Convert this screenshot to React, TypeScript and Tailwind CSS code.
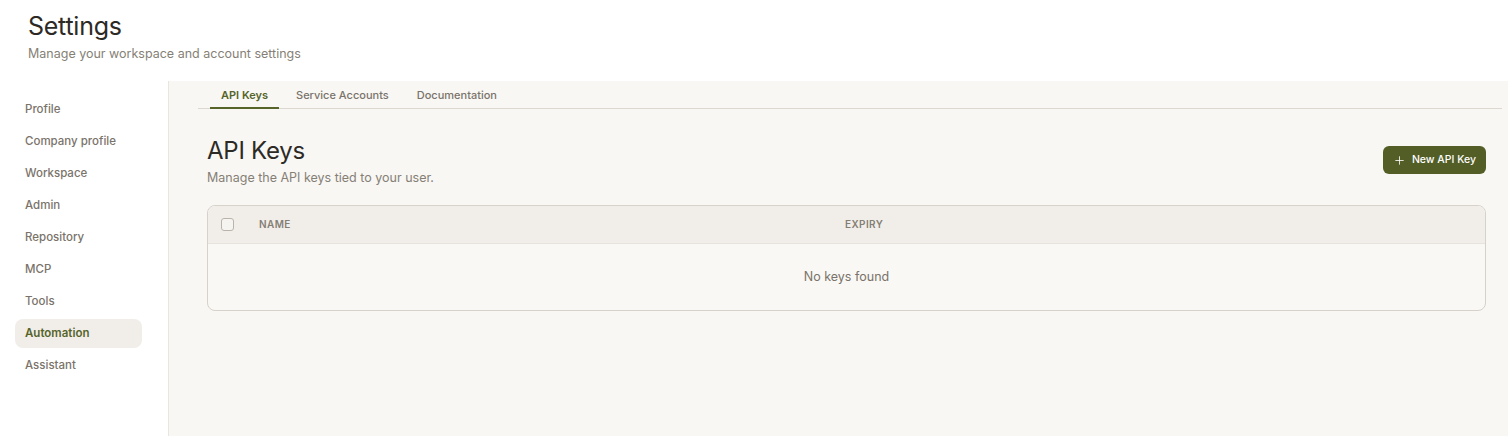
import { Plus } from "lucide-react";

const navItems = [
  "Profile",
  "Company profile",
  "Workspace",
  "Admin",
  "Repository",
  "MCP",
  "Tools",
  "Automation",
  "Assistant",
];

const tabs = ["API Keys", "Service Accounts", "Documentation"];

export default function App() {
  const activeNav = "Automation";
  const activeTab = "API Keys";

  return (
    <div className="flex h-[436px] flex-col bg-white font-['Inter',sans-serif] text-[#2d2a26]">
      <header className="h-[81px] shrink-0 px-[28px] pt-[10px]">
        <h1 className="text-[25px] leading-[32px] tracking-[-0.01em]">Settings</h1>
        <p className="mt-[3px] text-[12.5px] leading-[18px] text-[#867f76]">
          Manage your workspace and account settings
        </p>
      </header>

      <div className="flex min-h-0 flex-1">
        <aside className="w-[169px] shrink-0 border-r border-[#e9e5df] px-[15px] pt-[14px]">
          <nav className="flex w-[127px] flex-col gap-[3px]">
            {navItems.map((item) => (
              <a
                key={item}
                href="#"
                className={
                  item === activeNav
                    ? "flex h-[29px] items-center rounded-lg bg-[#f1eeea] px-[10px] text-[11.5px] font-semibold text-[#56642a]"
                    : "flex h-[29px] items-center rounded-lg px-[10px] text-[11.5px] font-medium text-[#7a736a]"
                }
              >
                {item}
              </a>
            ))}
          </nav>
        </aside>

        <main className="min-w-0 flex-1 bg-[#f8f7f4] pl-[29px] pr-[6px]">
          <div className="flex h-[28px] items-end gap-[6px] border-b border-[#dcd7cf] pl-[12px]">
            {tabs.map((tab) => (
              <button
                key={tab}
                className={
                  tab === activeTab
                    ? "-mb-px h-[27px] border-b-2 border-[#56642a] px-[11px] pt-[2px] text-[11px] font-semibold text-[#56642a]"
                    : "-mb-px h-[27px] border-b-2 border-transparent px-[11px] pt-[2px] text-[11px] font-medium text-[#7a736a]"
                }
              >
                {tab}
              </button>
            ))}
          </div>

          <div className="pr-[16px] pl-[9px] pt-[27px]">
            <div className="flex items-start justify-between">
              <div>
                <h2 className="text-[24px] leading-[30px] tracking-[-0.01em]">API Keys</h2>
                <p className="mt-[3px] text-[12.5px] leading-[18px] text-[#867f76]">
                  Manage the API keys tied to your user.
                </p>
              </div>
              <button className="mt-[10px] flex h-[28px] items-center gap-[6px] rounded-md bg-[#535e27] px-[10px] text-[10.5px] font-medium text-white">
                <Plus size={13} strokeWidth={1.5} />
                New API Key
              </button>
            </div>

            <div className="mt-[18px] overflow-hidden rounded-lg border border-[#d6d2ca] bg-[#f9f8f5]">
              <div className="flex h-[38px] items-center border-b border-[#e6e2dc] bg-[#f1eeea] pl-[13px] text-[10px] font-semibold tracking-[0.04em] text-[#857e75]">
                <span className="h-[13px] w-[13px] rounded-[3px] border border-[#b9b3aa] bg-[#f6f4f1]" />
                <span className="ml-[25px] w-[586px]">NAME</span>
                <span>EXPIRY</span>
              </div>
              <div className="flex h-[66px] items-center justify-center text-[12.5px] text-[#7a736a]">
                No keys found
              </div>
            </div>
          </div>
        </main>
      </div>
    </div>
  );
}
